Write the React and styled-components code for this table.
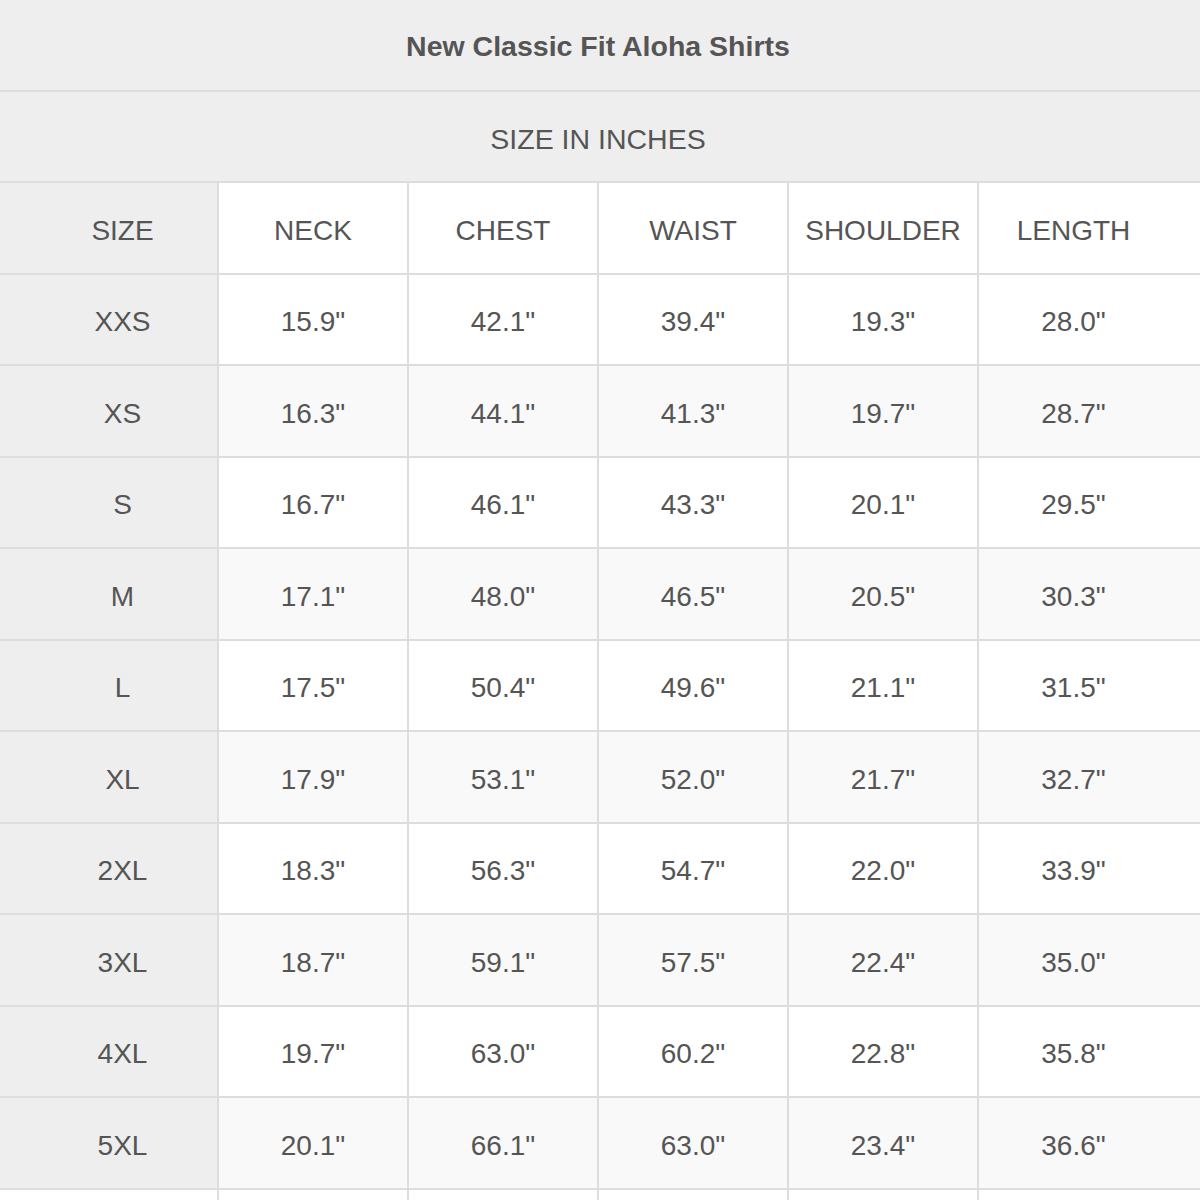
import React from "react";
import styled, { createGlobalStyle } from "styled-components";

const GlobalStyle = createGlobalStyle`
  html, body {
    margin: 0;
    padding: 0;
    background: #fff;
  }
  body {
    width: 1200px;
    height: 1200px;
    overflow: hidden;
    font-family: "Liberation Sans", Arial, sans-serif;
    color: #555;
  }
`;

const StTable = styled.div`
  width: 1200px;
  display: flex;
  flex-direction: column;
`;

const StBanner = styled.div`
  box-sizing: border-box;
  height: 91.5px;
  display: flex;
  align-items: center;
  justify-content: center;
  background: #eee;
  border-bottom: 2px solid #ddd;
  font-size: 28.5px;
  font-weight: ${({ bold }) => (bold ? 700 : 400)};
  padding-top: ${({ bold }) => (bold ? "4px" : "6px")};
  padding-right: 4px;
`;

const StRow = styled.div`
  box-sizing: border-box;
  height: 91.5px;
  display: grid;
  grid-template-columns: 217px 190px 190px 190px 190px 1fr;
  border-bottom: 2px solid #ddd;
  background: ${({ striped }) => (striped ? "#f9f9f9" : "#fff")};
`;

const StCell = styled.div`
  box-sizing: border-box;
  display: flex;
  align-items: center;
  justify-content: center;
  font-size: 28px;
  color: #555;
  border-left: ${({ first }) => (first ? "none" : "2px solid #ddd")};
  background: ${({ first, blank }) => (first && !blank ? "#eee" : "transparent")};
  padding-top: 6px;
  padding-left: ${({ first }) => (first ? "28px" : "0")};
  padding-right: ${({ last }) => (last ? "32px" : "0")};
`;

const headers = ["SIZE", "NECK", "CHEST", "WAIST", "SHOULDER", "LENGTH"];

const rows = [
  ["XXS", '15.9"', '42.1"', '39.4"', '19.3"', '28.0"'],
  ["XS", '16.3"', '44.1"', '41.3"', '19.7"', '28.7"'],
  ["S", '16.7"', '46.1"', '43.3"', '20.1"', '29.5"'],
  ["M", '17.1"', '48.0"', '46.5"', '20.5"', '30.3"'],
  ["L", '17.5"', '50.4"', '49.6"', '21.1"', '31.5"'],
  ["XL", '17.9"', '53.1"', '52.0"', '21.7"', '32.7"'],
  ["2XL", '18.3"', '56.3"', '54.7"', '22.0"', '33.9"'],
  ["3XL", '18.7"', '59.1"', '57.5"', '22.4"', '35.0"'],
  ["4XL", '19.7"', '63.0"', '60.2"', '22.8"', '35.8"'],
  ["5XL", '20.1"', '66.1"', '63.0"', '23.4"', '36.6"'],
];

const App = () => {
  return (
    <>
      <GlobalStyle />
      <StTable>
        <StBanner bold>New Classic Fit Aloha Shirts</StBanner>
        <StBanner>SIZE IN INCHES</StBanner>
        <StRow>
          {headers.map((h, i) => (
            <StCell key={h} first={i === 0} last={i === 5}>
              {h}
            </StCell>
          ))}
        </StRow>
        {rows.map((row, r) => (
          <StRow key={row[0]} striped={r % 2 === 1}>
            {row.map((v, i) => (
              <StCell key={i} first={i === 0} last={i === 5}>
                {v}
              </StCell>
            ))}
          </StRow>
        ))}
        {/* next row, cut off by the picture edge */}
        <StRow>
          {headers.map((h, i) => (
            <StCell key={h} first={i === 0} last={i === 5} blank />
          ))}
        </StRow>
      </StTable>
    </>
  );
};

export default App;
